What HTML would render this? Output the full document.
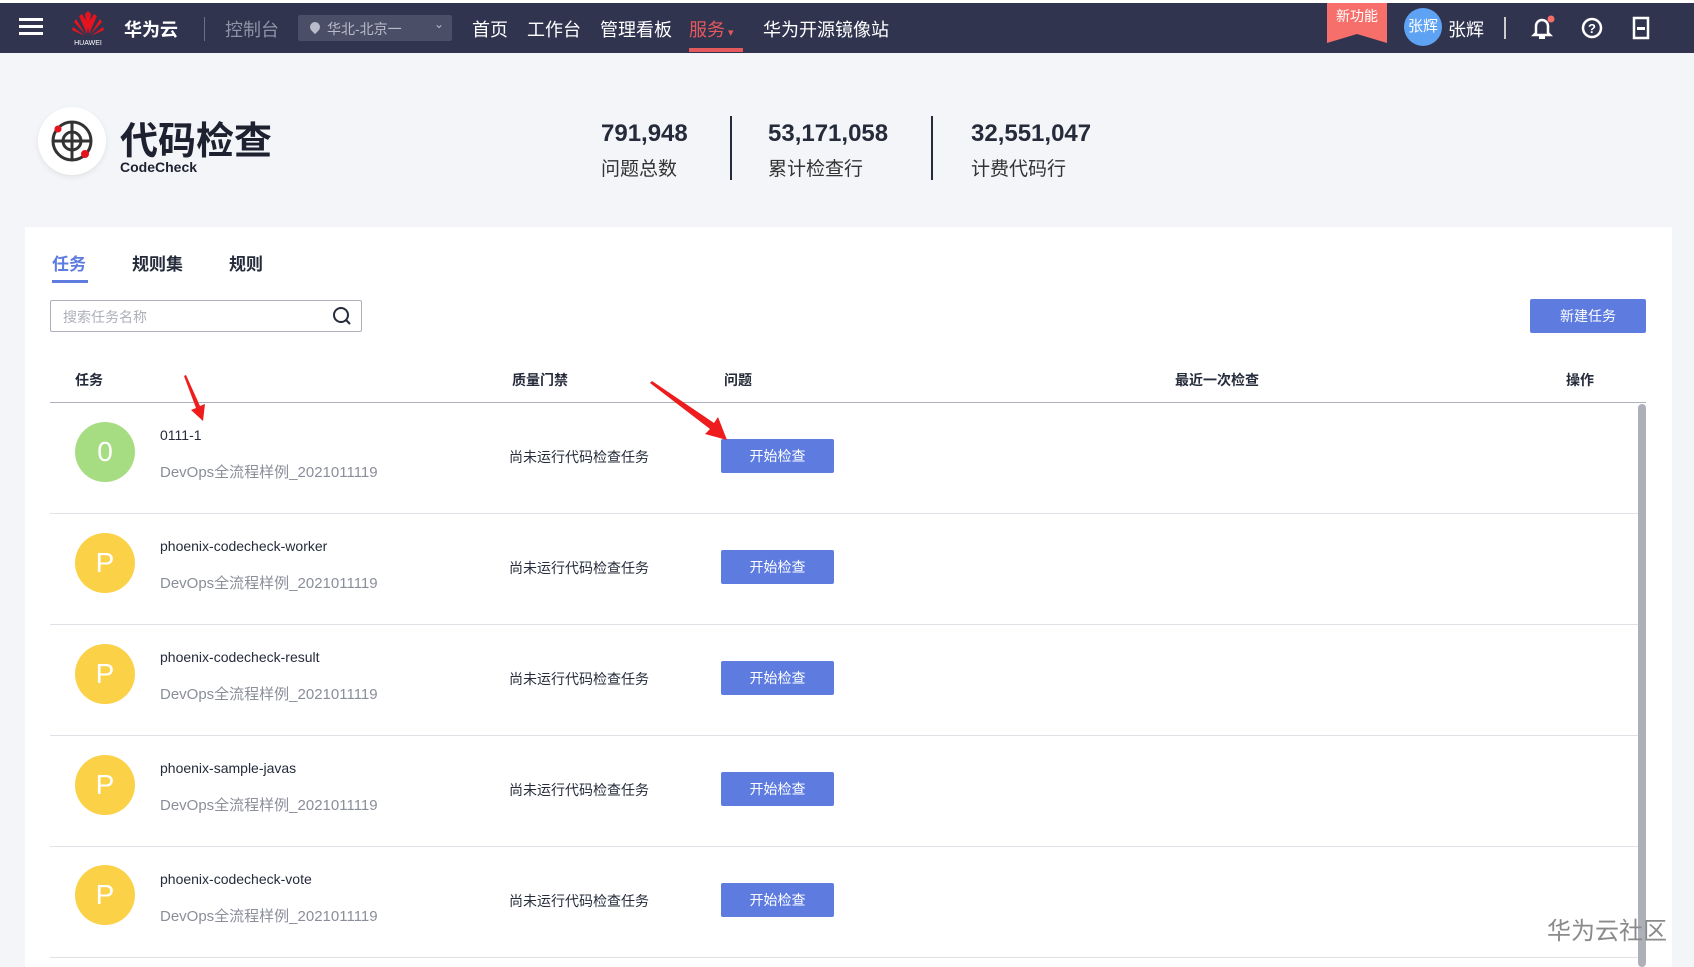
<!DOCTYPE html>
<html><head><meta charset="utf-8"><style>
*{margin:0;padding:0;box-sizing:border-box}
body{width:1694px;height:967px;overflow:hidden;background:#f3f5f8;font-family:"Liberation Sans","Noto Sans CJK SC",sans-serif;position:relative;color:#252b3a}
.a{position:absolute;white-space:nowrap}
.nav{position:absolute;left:0;top:3px;width:1694px;height:50px;background:#30344f}
.nav .t{color:#fff;font-size:18px;top:13px}
.card{position:absolute;left:25px;top:227px;width:1647px;height:740px;background:#fff}
.hd{font-size:14px;font-weight:bold;top:370px;color:#252b3a}
.row .nm{font-size:14px;color:#252b3a}
.row .sub{font-size:15px;color:#8a8e99}
.btn{background:#5e7ce0;color:#fff;font-size:14px;text-align:center;border-radius:2px}
.av{width:60px;height:60px;border-radius:50%;color:#fff;font-size:28px;text-align:center;line-height:60px}
</style></head><body>
<div style="position:absolute;left:0;top:0;width:1694px;height:3px;background:#fff"></div>
<div class="nav">
 <div class="a" style="left:19px;top:15px;width:24px;height:3px;background:#fff;box-shadow:0 7px 0 #fff,0 14px 0 #fff"></div>
 <svg class="a" style="left:70px;top:5px" width="36" height="40" viewBox="0 0 36 40"><g fill="#e4131e"><path d="M18 26 L15 6 L18 3 L21 6Z"/><path d="M17 26 L9 8 L12 6 L17 14Z"/><path d="M19 26 L27 8 L24 6 L19 14Z"/><path d="M16 27 L4 14 L6 11Z"/><path d="M20 27 L32 14 L30 11Z"/><path d="M15 28 L2 22 L3 19Z"/><path d="M21 28 L34 22 L33 19Z"/></g><text x="18" y="37" fill="#fff" font-size="7" text-anchor="middle" font-family="Liberation Sans">HUAWEI</text></svg>
 <div class="a t" style="left:124px;font-weight:bold">华为云</div>
 <div class="a" style="left:204px;top:14px;width:1px;height:24px;background:#6a6f85"></div>
 <div class="a t" style="left:225px;color:#8f93a6">控制台</div>
 <div class="a" style="left:298px;top:12px;width:154px;height:26px;background:#4a4f67;border-radius:2px"></div>
 <div class="a" style="left:310px;top:19px;width:10px;height:10px;border-radius:50% 50% 50% 0;transform:rotate(-45deg);background:#b8bccb"></div>
 <div class="a" style="left:327px;top:16px;color:#b8bccb;font-size:14px">华北-北京一</div>
 <div class="a" style="left:434px;top:14px;color:#b8bccb;font-size:12px">⌄</div>
 <div class="a t" style="left:472px">首页</div>
 <div class="a t" style="left:527px">工作台</div>
 <div class="a t" style="left:600px">管理看板</div>
 <div class="a t" style="left:689px;color:#e5595c">服务<span style="font-size:11px"> ▾</span></div>
 <div class="a" style="left:689px;top:45px;width:54px;height:4px;background:#e5595c"></div>
 <div class="a t" style="left:763px">华为开源镜像站</div>
 <svg class="a" style="left:1327px;top:0" width="60" height="40"><path d="M0 0H60V40L30 31L0 40Z" fill="#f66f6a"/><text x="30" y="18" fill="#fff" font-size="14" text-anchor="middle" font-family="Noto Sans CJK SC">新功能</text></svg>
 <div class="a" style="left:1404px;top:5px;width:38px;height:38px;border-radius:50%;background:#5ea2f4;color:#fff;font-size:15px;text-align:center;line-height:38px">张辉</div>
 <div class="a t" style="left:1448px">张辉</div>
 <div class="a" style="left:1504px;top:14px;width:2px;height:22px;background:#ccc"></div>
 <svg class="a" style="left:1530px;top:12px" width="26" height="26" viewBox="0 0 26 26"><path d="M6 18 V11 A6 6 0 0 1 18 11 V18 L20 20 H4Z" fill="none" stroke="#fff" stroke-width="2.5"/><rect x="9" y="21" width="6" height="3" fill="#fff"/><circle cx="21" cy="4" r="3.5" fill="#f66f6a"/></svg>
 <svg class="a" style="left:1580px;top:13px" width="24" height="24"><circle cx="12" cy="12" r="9" fill="none" stroke="#fff" stroke-width="2.5"/><text x="12" y="17" fill="#fff" font-size="13" font-weight="bold" text-anchor="middle" font-family="Liberation Sans">?</text></svg>
 <svg class="a" style="left:1632px;top:13px" width="18" height="24"><rect x="2" y="2" width="14" height="20" fill="none" stroke="#fff" stroke-width="2.5"/><rect x="5" y="11" width="8" height="3" fill="#fff"/></svg>
</div>

<div class="a" style="left:38px;top:107px;width:68px;height:68px;border-radius:50%;background:#fff;box-shadow:0 2px 6px rgba(0,0,0,.08)"></div>
<svg class="a" style="left:44px;top:113px" width="56" height="56" viewBox="0 0 56 56"><circle cx="28" cy="28" r="19" fill="none" stroke="#333" stroke-width="3"/><circle cx="28" cy="28" r="9" fill="none" stroke="#333" stroke-width="3"/><path d="M28 9V47M9 28H47" stroke="#333" stroke-width="3"/><circle cx="14" cy="16" r="3.5" fill="#e4131e"/><circle cx="41" cy="41" r="4" fill="#e4131e"/></svg>
<div class="a" style="left:120px;top:110px;font-size:38px;font-weight:bold;color:#1d2130">代码检查</div>
<div class="a" style="left:120px;top:159px;font-size:14px;font-weight:bold;color:#1d2130">CodeCheck</div>
<div class="a" style="left:601px;top:120px;font-size:24px;font-weight:bold;color:#252b3a">791,948</div>
<div class="a" style="left:601px;top:154px;font-size:19px;color:#333">问题总数</div>
<div class="a" style="left:730px;top:116px;width:2px;height:64px;background:#252b3a"></div>
<div class="a" style="left:768px;top:120px;font-size:24px;font-weight:bold;color:#252b3a">53,171,058</div>
<div class="a" style="left:768px;top:154px;font-size:19px;color:#333">累计检查行</div>
<div class="a" style="left:931px;top:116px;width:2px;height:64px;background:#252b3a"></div>
<div class="a" style="left:971px;top:120px;font-size:24px;font-weight:bold;color:#252b3a">32,551,047</div>
<div class="a" style="left:971px;top:154px;font-size:19px;color:#333">计费代码行</div>

<div class="card"></div>
<div class="a" style="left:52px;top:250px;font-size:17px;font-weight:bold;color:#5e7ce0">任务</div>
<div class="a" style="left:52px;top:280px;width:36px;height:3px;background:#5e7ce0"></div>
<div class="a" style="left:132px;top:250px;font-size:17px;font-weight:bold">规则集</div>
<div class="a" style="left:229px;top:250px;font-size:17px;font-weight:bold">规则</div>
<div class="a" style="left:50px;top:300px;width:312px;height:32px;border:1px solid #adb0b8;border-radius:2px"></div>
<div class="a" style="left:63px;top:307px;font-size:14px;color:#adb0b8">搜索任务名称</div>
<svg class="a" style="left:332px;top:306px" width="20" height="20"><circle cx="9" cy="9" r="7" fill="none" stroke="#252b3a" stroke-width="2"/><path d="M14 14L18 18" stroke="#252b3a" stroke-width="2"/></svg>
<div class="a btn" style="left:1530px;top:299px;width:116px;height:34px;line-height:34px">新建任务</div>

<div class="a hd" style="left:75px">任务</div>
<div class="a hd" style="left:512px">质量门禁</div>
<div class="a hd" style="left:724px">问题</div>
<div class="a hd" style="left:1175px">最近一次检查</div>
<div class="a hd" style="left:1566px">操作</div>
<div class="a" style="left:50px;top:402px;width:1596px;height:1px;background:#adb0b8"></div>
<div class="a" style="left:1638px;top:404px;width:8px;height:563px;background:#adb0b8;border-radius:4px"></div>

<div class="row">
 <div class="a av" style="left:75px;top:422px;background:#a6dd82">0</div>
 <div class="a nm" style="left:160px;top:427px">0111-1</div>
 <div class="a sub" style="left:160px;top:461px">DevOps全流程样例_2021011119</div>
 <div class="a nm" style="left:509px;top:447px">尚未运行代码检查任务</div>
 <div class="a btn" style="left:721px;top:439px;width:113px;height:34px;line-height:34px">开始检查</div>
 <div class="a" style="left:50px;top:513px;width:1588px;height:1px;background:#dfe1e6"></div>

 <div class="a av" style="left:75px;top:533px;background:#fac20a;opacity:.75">P</div>
 <div class="a nm" style="left:160px;top:538px">phoenix-codecheck-worker</div>
 <div class="a sub" style="left:160px;top:572px">DevOps全流程样例_2021011119</div>
 <div class="a nm" style="left:509px;top:558px">尚未运行代码检查任务</div>
 <div class="a btn" style="left:721px;top:550px;width:113px;height:34px;line-height:34px">开始检查</div>
 <div class="a" style="left:50px;top:624px;width:1588px;height:1px;background:#dfe1e6"></div>

 <div class="a av" style="left:75px;top:644px;background:#fac20a;opacity:.75">P</div>
 <div class="a nm" style="left:160px;top:649px">phoenix-codecheck-result</div>
 <div class="a sub" style="left:160px;top:683px">DevOps全流程样例_2021011119</div>
 <div class="a nm" style="left:509px;top:669px">尚未运行代码检查任务</div>
 <div class="a btn" style="left:721px;top:661px;width:113px;height:34px;line-height:34px">开始检查</div>
 <div class="a" style="left:50px;top:735px;width:1588px;height:1px;background:#dfe1e6"></div>

 <div class="a av" style="left:75px;top:755px;background:#fac20a;opacity:.75">P</div>
 <div class="a nm" style="left:160px;top:760px">phoenix-sample-javas</div>
 <div class="a sub" style="left:160px;top:794px">DevOps全流程样例_2021011119</div>
 <div class="a nm" style="left:509px;top:780px">尚未运行代码检查任务</div>
 <div class="a btn" style="left:721px;top:772px;width:113px;height:34px;line-height:34px">开始检查</div>
 <div class="a" style="left:50px;top:846px;width:1588px;height:1px;background:#dfe1e6"></div>

 <div class="a av" style="left:75px;top:865px;background:#fac20a;opacity:.75">P</div>
 <div class="a nm" style="left:160px;top:871px">phoenix-codecheck-vote</div>
 <div class="a sub" style="left:160px;top:905px">DevOps全流程样例_2021011119</div>
 <div class="a nm" style="left:509px;top:891px">尚未运行代码检查任务</div>
 <div class="a btn" style="left:721px;top:883px;width:113px;height:34px;line-height:34px">开始检查</div>
 <div class="a" style="left:50px;top:957px;width:1588px;height:1px;background:#dfe1e6"></div>
</div>

<svg class="a" style="left:0;top:0;pointer-events:none" width="1694" height="967">
 <path d="M184 376 L196 408 L191 410 L203 421 L205 404 L200 406 L186 375 Z" fill="#ee1c1c"/>
 <path d="M650 383 L710 429 L705 434 L727 440 L718 417 L714 423 L652 381 Z" fill="#ee1c1c"/>
</svg>
<div class="a" style="left:1547px;top:911px;font-size:24px;color:#8a8a8a">华为云社区</div>
</body></html>
